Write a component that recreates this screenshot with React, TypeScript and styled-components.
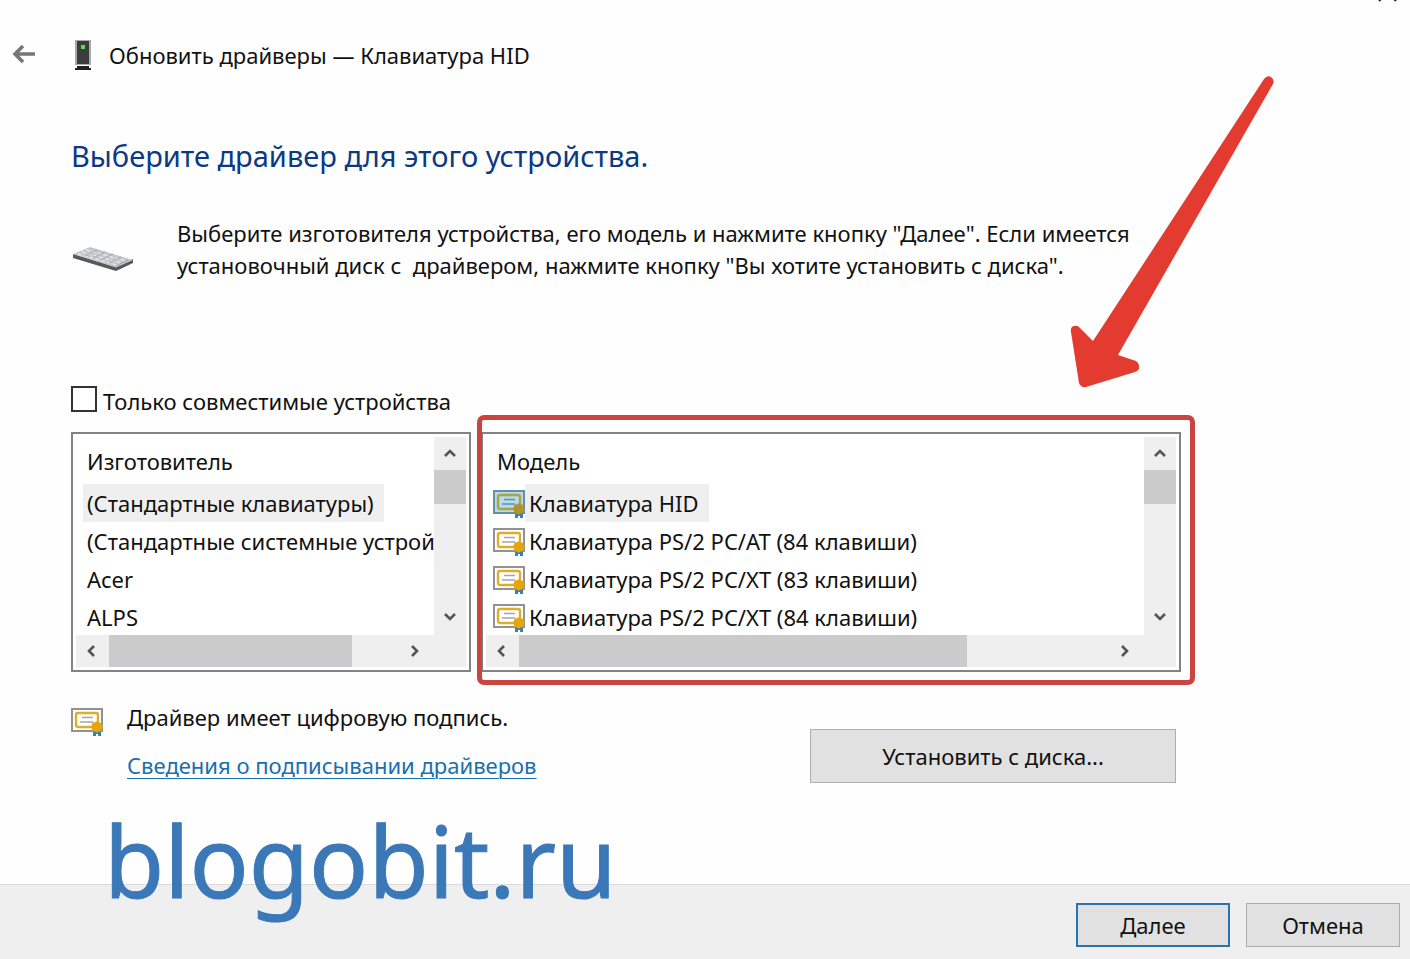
import React, { useState } from "react";
import styled, { createGlobalStyle, css } from "styled-components";

const GlobalStyle = createGlobalStyle`
  *, *::before, *::after { box-sizing: border-box; }
  body {
    margin: 0;
    background: #fefefe;
    color: #111;
    font: 22px/32px "Segoe UI", "Noto Sans", "Open Sans", sans-serif;
  }
  button, input { font: inherit; color: inherit; }
`;

const Page = styled.div`
  position: relative;
  display: flex;
  flex-direction: column;
  min-height: 100vh;
  overflow: hidden;
`;

const TitleBar = styled.header`
  display: flex;
  align-items: center;
  padding: 34px 12px 0;
  height: 76px;
`;

const BackButton = styled.button`
  display: flex;
  width: 24px;
  margin-right: 38px;
  padding: 0;
  border: 0;
  background: none;
`;

const TitleText = styled.span`
  margin-left: 17px;
`;

const CloseButton = styled.button`
  position: absolute;
  top: 0;
  right: 10px;
  display: flex;
  padding: 0;
  border: 0;
  background: none;
`;

const Content = styled.main`
  flex: 1;
  padding: 60px 229px 24px 71px;
`;

const Heading = styled.h1`
  margin: 0;
  font-size: 29px;
  line-height: 40px;
  font-weight: 400;
  color: #0b3a85;
`;

const Intro = styled.div`
  display: flex;
  align-items: flex-end;
  gap: 44px;
  margin-top: 41px;
  white-space: nowrap;

  svg { margin-bottom: 8px; }
  p { margin: 0; }
`;

const CompatibleOption = styled.label`
  display: flex;
  align-items: flex-start;
  width: max-content;
  gap: 6px;
  margin-top: 104px;
`;

const Checkbox = styled.input`
  appearance: none;
  width: 26px;
  height: 26px;
  margin: 1px 0 0;
  border: 2px solid #333;
  background: #fff;

  &:checked { background: #333; box-shadow: inset 0 0 0 4px #fff; }
`;

const Panels = styled.div`
  display: grid;
  grid-template-columns: minmax(0, 4fr) minmax(0, 7fr);
  gap: 10px;
  margin-top: 15px;
`;

const PanelHolder = styled.div`
  position: relative;
`;

const Panel = styled.section`
  display: grid;
  grid-template: 198px 32px / minmax(0, 1fr) 32px;
  padding: 3px;
  border: 2px solid #828388;
  background: #fff;
`;

const ListArea = styled.div`
  padding-left: 7px;
  overflow: hidden;
`;

const ListTitle = styled.h2`
  margin: 0;
  padding: 8px 4px 7px;
  font-size: 22px;
  line-height: 32px;
  font-weight: 400;
`;

const List = styled.ul`
  margin: 0;
  padding: 0;
  list-style: none;
`;

const RowButton = styled.button`
  display: flex;
  align-items: center;
  height: 38px;
  padding: 0;
  border: 0;
  background: none;
  white-space: nowrap;
`;

const RowLabel = styled.span<{ $selected: boolean }>`
  padding: 3px ${(p) => (p.$selected ? 10 : 0)}px 3px 4px;
  background: ${(p) => (p.$selected ? "#efefef" : "transparent")};
`;

const ScrollBar = styled.div<{ $vertical?: boolean }>`
  display: flex;
  flex-direction: ${(p) => (p.$vertical ? "column" : "row")};
  padding: ${(p) => (p.$vertical ? "0 0 2px" : "0 3px 0 0")};
  background: #efefef;
`;

const ScrollArrow = styled.button<{ $vertical: boolean }>`
  display: flex;
  align-items: center;
  justify-content: center;
  flex: none;
  width: ${(p) => (p.$vertical ? 31 : 33)}px;
  height: ${(p) => (p.$vertical ? 33 : 31)}px;
  padding: 0;
  border: 0;
  background: none;
`;

const ScrollTrack = styled.div`
  flex: 1;
`;

const ScrollThumb = styled.div<{ $vertical?: boolean; $size: number }>`
  background: #cbcbcb;
  ${(p) =>
    p.$vertical
      ? css`width: 100%; height: ${p.$size}px;`
      : css`height: 100%; width: ${p.$size}%;`}
`;

const Corner = styled.div`
  background: #efefef;
`;

const HighlightFrame = styled.div`
  position: absolute;
  inset: -17px -14px -13px -4px;
  border: 5px solid #c9453f;
  border-radius: 7px;
  pointer-events: none;
`;

const Pointer = styled.svg`
  position: absolute;
  top: -362px;
  right: -99px;
  pointer-events: none;
`;

const Bottom = styled.div`
  display: flex;
  justify-content: space-between;
  align-items: flex-end;
  margin-top: 29px;
  padding-right: 5px;
`;

const Signature = styled.div`
  display: grid;
  grid-template-columns: 32px auto;
  grid-template-rows: 32px 32px;
  column-gap: 24px;
  row-gap: 16px;
  padding-bottom: 2px;

  svg { margin-top: 5px; }
`;

const SignatureLink = styled.a`
  grid-column: 2;
  color: #1a6fae;
  text-decoration-thickness: 1px;
  text-underline-offset: 4px;
`;

const PushButton = styled.button<{ $primary?: boolean; $large?: boolean }>`
  width: ${(p) => (p.$large ? 366 : 154)}px;
  height: ${(p) => (p.$large ? 54 : 44)}px;
  padding: 0;
  border: ${(p) => (p.$primary ? "2px solid #2874ad" : "1px solid #adadad")};
  background: #e1e1e1;
`;

const Footer = styled.footer`
  display: flex;
  justify-content: flex-end;
  gap: 16px;
  padding: 18px 10px 12px;
  border-top: 1px solid #dcdcdc;
  background: #efefef;
`;

const Watermark = styled.div`
  position: absolute;
  left: 104px;
  bottom: 49px;
  font: 400 98px/100px "Noto Sans", sans-serif;
  color: #3a78b8;
  -webkit-text-stroke: 1px #3a78b8;
  pointer-events: none;
`;

const chevrons = {
  up: "M3 10 8 5l5 5",
  down: "M3 5l5 5 5-5",
  left: "M9 3 4 8l5 5",
  right: "M5 3l5 5-5 5",
};

function Arrow({ to, label }: { to: keyof typeof chevrons; label: string }) {
  return (
    <ScrollArrow type="button" aria-label={label} $vertical={to === "up" || to === "down"}>
      <svg width="16" height="16" viewBox="0 0 16 16" fill="none" stroke="#555" strokeWidth="2.6">
        <path d={chevrons[to]} />
      </svg>
    </ScrollArrow>
  );
}

function CertificateIcon({ selected = false }: { selected?: boolean }) {
  const paper = selected ? "#b9d9ec" : "#fff";
  const gold = selected ? "#a8a548" : "#dfae27";
  return (
    <svg width="32" height="30" viewBox="0 0 32 30" fill="none" aria-hidden="true">
      <rect x="1" y="3" width="30" height="22" fill={paper} stroke={selected ? "#668ea5" : "#909295"} strokeWidth="2" />
      <rect x="5" y="7" width="22" height="14" rx="2" stroke={gold} strokeWidth="2.4" />
      <path d="M11 11.500h11M9 16h13" stroke={selected ? "#5c93b8" : "#a2a5b3"} strokeWidth="1.500" />
      <path d="M22 23h8v7h-3v-2h-2v2h-3z" fill="#2f86bd" />
      <path d="m26 15 2 1.500 2.500.2.300 2.500 1 1.800-1 2-.5 2.300-2.500.2-2 1.300-2-1.300-2.500-.3-.3-2.400-1-2 1-2 .5-2.400 2.500-.2z" fill={selected ? "#b0952b" : "#e7a50c"} />
    </svg>
  );
}

function KeyboardIcon() {
  return (
    <svg width="62" height="28" viewBox="0 0 62 28" aria-hidden="true">
      <path d="M2 9 45 22 62 14v4L45 26 2 13z" fill="#56585b" />
      <path d="M2 9 19 2l43 13-17 7.500z" fill="#c3c7c9" />
      <path d="M7 9 46 20M11 7 50 18M15 5 55 16" stroke="#e4e7e8" strokeWidth="1.500" strokeDasharray="4 2" />
      <path d="m14 11 12-6m-4 8 12-6m-4 8 12-6m-4 9 12-6m-5 9 12-6" stroke="#a2a6a9" />
    </svg>
  );
}

function DeviceIcon() {
  return (
    <svg width="18" height="32" viewBox="0 0 18 32" aria-hidden="true">
      <path d="M1 1h16v25H1z" fill="#aaa" />
      <path d="M3 2h12v23H3z" fill="#3b3c3c" />
      <path d="M7 6h4v4H7z" fill="#52df55" />
      <path d="M3 27h12v2h2v2H1v-2h2z" fill="#222" />
    </svg>
  );
}

interface ListPanelProps {
  title: string;
  items: string[];
  thumb: number;
  icons?: boolean;
}

function ListPanel({ title, items, thumb, icons }: ListPanelProps) {
  const [selected, setSelected] = useState(0);
  return (
    <Panel aria-label={title}>
      <ListArea>
        <ListTitle>{title}</ListTitle>
        <List>
          {items.map((item, i) => (
            <li key={item}>
              <RowButton type="button" aria-pressed={i === selected} onClick={() => setSelected(i)}>
                {icons && <CertificateIcon selected={i === selected} />}
                <RowLabel $selected={i === selected}>{item}</RowLabel>
              </RowButton>
            </li>
          ))}
        </List>
      </ListArea>
      <ScrollBar $vertical>
        <Arrow to="up" label="Вверх" />
        <ScrollTrack><ScrollThumb $vertical $size={34} /></ScrollTrack>
        <Arrow to="down" label="Вниз" />
      </ScrollBar>
      <ScrollBar>
        <Arrow to="left" label="Влево" />
        <ScrollTrack><ScrollThumb $size={thumb} /></ScrollTrack>
        <Arrow to="right" label="Вправо" />
      </ScrollBar>
      <Corner />
    </Panel>
  );
}

const manufacturers = ["(Стандартные клавиатуры)", "(Стандартные системные устрой", "Acer", "ALPS"];
const models = [
  "Клавиатура HID",
  "Клавиатура PS/2 PC/AT (84 клавиши)",
  "Клавиатура PS/2 PC/XT (83 клавиши)",
  "Клавиатура PS/2 PC/XT (84 клавиши)",
];

export default function App() {
  return (
    <Page>
      <GlobalStyle />
      <TitleBar>
        <BackButton type="button" aria-label="Назад">
          <svg width="24" height="20" viewBox="0 0 24 20" fill="none" stroke="#777" strokeWidth="3.600">
            <path d="M23 9H3M11 1 3 9l8 8" />
          </svg>
        </BackButton>
        <DeviceIcon />
        <TitleText>Обновить драйверы — Клавиатура HID</TitleText>
        <CloseButton type="button" aria-label="Закрыть">
          <svg width="24" height="3" viewBox="0 0 24 3" stroke="#222" strokeWidth="2">
            <path d="M5-1 3 1M18-1l2 2" />
          </svg>
        </CloseButton>
      </TitleBar>
      <Content>
        <Heading>Выберите драйвер для этого устройства.</Heading>
        <Intro>
          <KeyboardIcon />
          <p>
            Выберите изготовителя устройства, его модель и нажмите кнопку "Далее". Если имеется
            <br />
            установочный диск с&nbsp; драйвером, нажмите кнопку "Вы хотите установить с диска".
          </p>
        </Intro>
        <CompatibleOption>
          <Checkbox type="checkbox" />
          Только совместимые устройства
        </CompatibleOption>
        <Panels>
          <PanelHolder>
            <ListPanel title="Изготовитель" items={manufacturers} thumb={84} />
          </PanelHolder>
          <PanelHolder>
            <ListPanel title="Модель" items={models} thumb={76} icons />
            <HighlightFrame />
            <Pointer width="216" height="324" viewBox="1064 70 216 324" aria-hidden="true">
              <path
                d="M1264 79Q1267 75 1271 77Q1275 80 1273 84L1118 355L1136 361Q1140 364 1139 369Q1138 371 1135 372L1086 387Q1081 388 1079 383L1071 332Q1070 327 1074 326Q1077 325 1079 327L1093 341Z"
                fill="#e43b30"
              />
            </Pointer>
          </PanelHolder>
        </Panels>
        <Bottom>
          <Signature>
            <CertificateIcon />
            <span>Драйвер имеет цифровую подпись.</span>
            <SignatureLink href="#signing">Сведения о подписывании драйверов</SignatureLink>
          </Signature>
          <PushButton type="button" $large>Установить с диска...</PushButton>
        </Bottom>
      </Content>
      <Footer>
        <PushButton type="button" $primary>Далее</PushButton>
        <PushButton type="button">Отмена</PushButton>
      </Footer>
      <Watermark>blogobit.ru</Watermark>
    </Page>
  );
}
